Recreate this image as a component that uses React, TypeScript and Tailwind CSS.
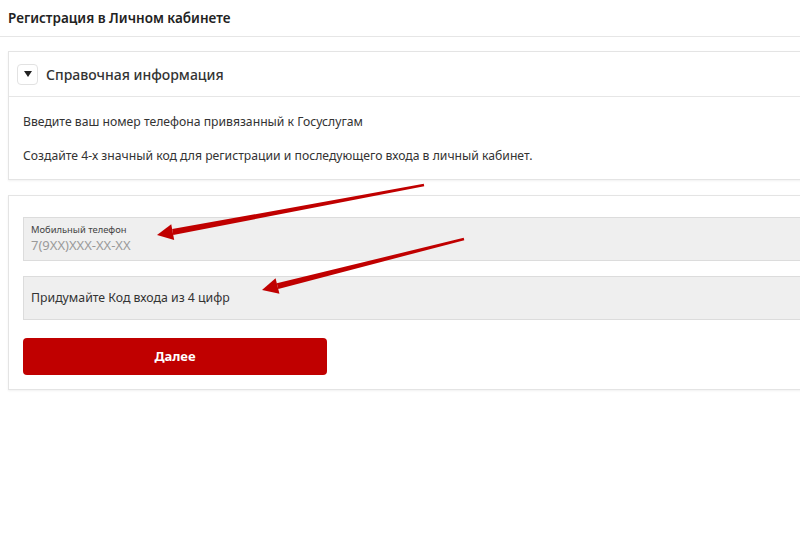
const font = { fontFamily: '"Noto Sans", "Open Sans", Arial, sans-serif' };

function Arrow({ x1, y1, x2, y2 }: { x1: number; y1: number; x2: number; y2: number }) {
  const dx = x2 - x1;
  const dy = y2 - y1;
  const len = Math.hypot(dx, dy);
  const ux = dx / len;
  const uy = dy / len;
  const px = -uy;
  const py = ux;
  const hl = 16;
  const hw = 8;
  const bx = x2 - ux * hl;
  const by = y2 - uy * hl;
  const head = `${x2},${y2} ${bx + px * hw},${by + py * hw} ${bx - px * hw},${by - py * hw}`;
  const tail = `${x1 + px * 1.2},${y1 + py * 1.2} ${bx + px * 3},${by + py * 3} ${bx - px * 3},${by - py * 3} ${x1 - px * 1.2},${y1 - py * 1.2}`;
  return (
    <g fill="#c00000">
      <polygon points={tail} />
      <polygon points={head} />
    </g>
  );
}

export default function App() {
  return (
    <div className="relative w-[800px] h-[535px] overflow-hidden bg-white text-[#333]" style={font}>
      <div className="h-[37px] border-b border-[#e6e6e6] flex items-center px-2">
        <h1 className="text-[13.5px] font-semibold text-[#222]">Регистрация в Личном кабинете</h1>
      </div>

      <div className="pl-2 pt-[14px] w-[830px] flex flex-col gap-[15px]">
        <div className="border border-[#e4e4e4] bg-white shadow-[0_1px_2px_rgba(0,0,0,0.06)]">
          <div className="h-[45px] flex items-center gap-[8px] pl-[8px] border-b border-[#e6e6e6]">
            <button className="w-[21px] h-[21px] rounded-[4px] border border-[#e2e2e2] bg-white flex items-center justify-center">
              <svg width="8" height="6" viewBox="0 0 8 6">
                <polygon points="0,0 8,0 4,6" fill="#222" />
              </svg>
            </button>
            <span className="text-[14px] font-medium text-[#333]">Справочная информация</span>
          </div>
          <div className="px-[14px] pt-[16px] pb-[14px] text-[12.2px] leading-[18px] text-[#333]">
            <p>Введите ваш номер телефона привязанный к Госуслугам</p>
            <p className="mt-[16px]">Создайте 4-х значный код для регистрации и последующего входа в личный кабинет.</p>
          </div>
        </div>

        <div className="border border-[#e4e4e4] bg-white shadow-[0_1px_2px_rgba(0,0,0,0.06)] px-[14px] pt-[21px] pb-[14px] flex flex-col">
          <div className="h-[44px] bg-[#efefef] border border-[#dcdcdc] px-[7px] flex flex-col justify-center">
            <span className="text-[9.4px] leading-[12px] text-[#444]">Мобильный телефон</span>
            <span className="text-[13px] leading-[18px] text-[#9a9a9a]">7(9XX)XXX-XX-XX</span>
          </div>
          <div className="mt-[15px] h-[44px] bg-[#efefef] border border-[#dcdcdc] px-[7px] flex items-center">
            <span className="text-[12.3px] text-[#333]">Придумайте Код входа из 4 цифр</span>
          </div>
          <button className="mt-[18px] w-[304px] h-[37px] rounded-[4px] bg-[#c00000] text-white text-[13px] font-bold">
            Далее
          </button>
        </div>
      </div>

      <svg className="absolute inset-0 pointer-events-none" width="800" height="535">
        <Arrow x1={424} y1={185} x2={157} y2={235} />
        <Arrow x1={464} y1={239} x2={262} y2={290} />
      </svg>
    </div>
  );
}
